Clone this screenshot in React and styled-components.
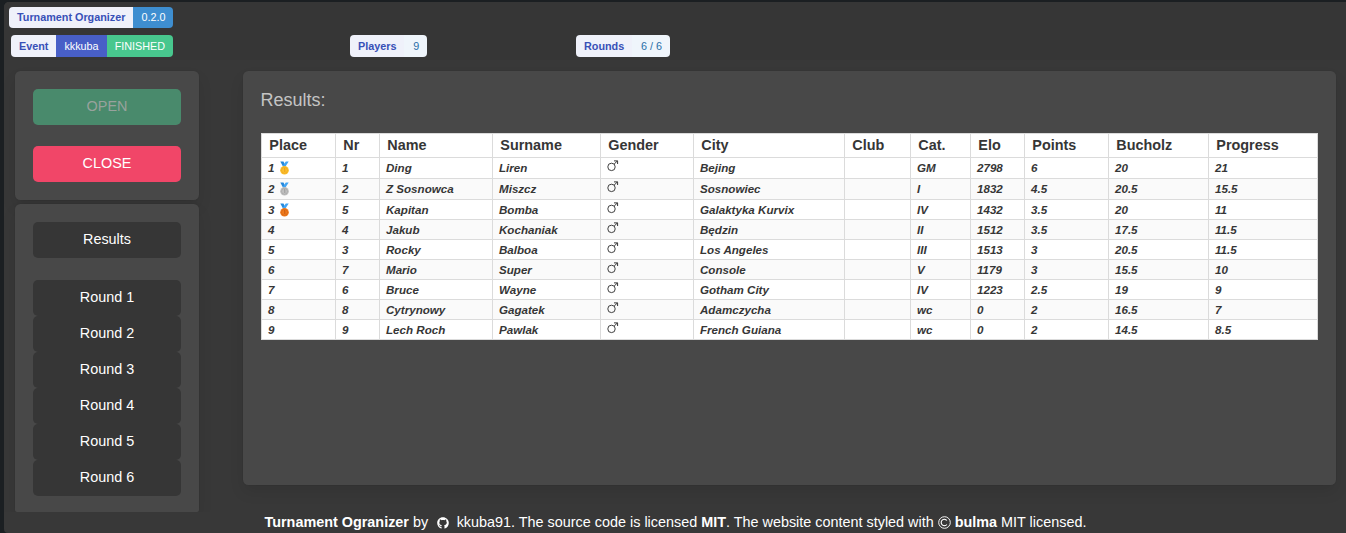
import React from 'react';
import styled, { createGlobalStyle } from 'styled-components';
import { FaGithub } from 'react-icons/fa';

const Global = createGlobalStyle`
  *, *::before, *::after { box-sizing: border-box; }
  body {
    margin: 0;
    background: #1b1f22;
    color: #fff;
    font-family: "Liberation Sans", Arial, sans-serif;
    font-size: 14.4px;
    line-height: 1.5;
    overflow: hidden;
  }
`;

const Window = styled.div`
  height: 531px;
  margin: 2px 0 0 4px;
  background: #383838;
  border-radius: 5px 0 0 4px;
  display: flex;
  flex-direction: column;
  overflow: hidden;
`;

const Header = styled.header`
  flex: none;
  height: 58px;
  padding: 5px 5px 0;
  background: #363636;
`;

const InfoRow = styled.div`
  display: grid;
  grid-template-columns: 339px 226px 1fr;
  padding: 7px 0 0 2px;
`;

const Tags = styled.div`
  display: flex;
  width: max-content;
  height: ${({ $h }) => $h || 22}px;
  border-radius: 4px;
  overflow: hidden;
`;

const tones = {
  name: ['#eff1fa', '#3850b7'],
  info: ['#3e8ed0', '#fff'],
  link: ['#485fc7', '#fff'],
  success: ['#48c78e', '#fff'],
  value: ['#eff5fb', '#296fa8'],
};

const Tag = styled.span`
  display: flex;
  align-items: center;
  padding: 0 8px;
  font-size: 10.8px;
  white-space: nowrap;
  font-weight: ${({ $tone }) => ($tone === 'name' ? 700 : 400)};
  background: ${({ $tone }) => tones[$tone][0]};
  color: ${({ $tone }) => tones[$tone][1]};

  ${Tags} > &:last-child { padding-left: ${({ $tone }) => ($tone === 'value' ? 8.8 : 8)}px; }
`;

const Body = styled.main`
  flex: none;
  height: 452px;
  padding: 11px 10px 0 11px;
  display: grid;
  grid-template-columns: 184px 1093px;
  column-gap: 44px;
  overflow: hidden;
`;

const Sidebar = styled.aside`
  display: flex;
  flex-direction: column;
  gap: 4px;
  height: 441px;
`;

const Box = styled.section`
  background: #484848;
  border-radius: 5.4px;
  padding: 18px;
  box-shadow: 0 7.2px 14.4px -1.8px rgba(10, 10, 10, 0.1), 0 0 0 1px rgba(10, 10, 10, 0.02);
`;

const ControlBox = styled(Box)`
  height: 129px;
  display: flex;
  flex-direction: column;
  gap: 21px;
`;

const NavBox = styled(Box)`
  height: 308px;
  border-radius: 5.4px 5.4px 2px 2px;
`;

const ResultsBox = styled(Box)`
  height: 414px;
`;

const Button = styled.button`
  display: block;
  flex: none;
  width: 100%;
  height: 36px;
  padding: 0 0 1px;
  border: 0;
  border-radius: 5px;
  font: inherit;
  color: #fff;
  background: ${({ $bg }) => $bg || '#363636'};
  &:disabled { color: #98a29d; }
`;

const RoundList = styled.nav`
  margin-top: 22px;
`;

const Title = styled.h1`
  margin: 0 0 21px -0.5px;
  height: 23px;
  line-height: 22px;
  font-size: 18px;
  font-weight: 400;
  color: #c4c4c4;
`;

const Table = styled.table`
  width: 1057px;
  table-layout: fixed;
  border-collapse: separate;
  border-spacing: 0;
  border: solid #dbdbdb;
  border-width: 1px 0 0 1px;
  background: #fff;
  color: #363636;
`;

const Col = styled.col`
  width: ${({ $w }) => $w}px;
`;

const Th = styled.th`
  height: 24px;
  padding: 0 0 1px 7.3px;
  border: solid #dbdbdb;
  border-width: 0 1px 1px 0;
  text-align: left;
  line-height: 22px;
`;

const Tr = styled.tr`
  height: ${({ $tall }) => ($tall ? 21 : 20)}px;
  background: ${({ $striped }) => ($striped ? '#fafafa' : '#fff')};
`;

const Td = styled.td`
  padding: 0 0 0 6px;
  border: solid #dbdbdb;
  border-width: 0 1px 1px 0;
  font-size: 11.6px;
  font-weight: 700;
  font-style: italic;
  line-height: 16px;
  white-space: nowrap;
`;

const PlaceCell = styled.div`
  display: flex;
  align-items: center;
  gap: 4px;
`;

const MedalIcon = styled.svg`
  width: 13px;
  height: 14px;
`;

const GenderIcon = styled.svg`
  display: block;
  width: 12px;
  height: 12px;
  margin: -4px 0 0;
`;

const Footer = styled.footer`
  display: flex;
  align-items: center;
  height: 20px;
  padding-left: 260.5px;
  white-space: pre;
  line-height: 20px;
`;

const GithubSlot = styled.span`
  display: flex;
  margin: 1px 8px 0 8.5px;
  font-size: 12px;
`;

const CopyrightIcon = styled.svg`
  width: 13px;
  height: 13px;
  margin: 0 4px 0 0;
`;

const Medal = ({ color, shade }) => (
  <MedalIcon viewBox="0 0 13 14">
    <path d="M2.3 0.5H5.5L7.6 4.8L5.4 6.3Z" fill="#2488dc" />
    <path d="M10.7 0.5H7.8L4.8 5L7 6.3Z" fill="#42a5f5" />
    <circle cx="6.5" cy="9.3" r="4.3" fill={color} />
    <circle cx="6.5" cy="9.3" r="3" fill="none" stroke={shade} strokeWidth="0.35" />
    <path d="M6 8L6.8 7.5V11" fill="none" stroke={shade} strokeWidth="0.7" />
  </MedalIcon>
);

const Male = () => (
  <GenderIcon viewBox="0 0 12 12" fill="none" stroke="#363636">
    <circle cx="4.5" cy="6.9" r="3.7" strokeWidth="0.95" />
    <path d="M7.1 4.2L10.3 1M7 .9H10.6V4" strokeWidth="1" />
  </GenderIcon>
);

const Copyright = () => (
  <CopyrightIcon viewBox="0 0 13 13" fill="none" stroke="#fff">
    <circle cx="6.5" cy="6.5" r="5.8" strokeWidth="0.95" />
    <path d="M8.9 4.5A3.2 3.2 0 1 0 8.9 8.5" strokeWidth="1.15" />
  </CopyrightIcon>
);

const medals = [
  ['#fbc02d', '#e58f13'],
  ['#c0c0c0', '#8c8c8c'],
  ['#f07c1d', '#b94f13'],
];

const columns = [
  ['Place', 74], ['Nr', 44], ['Name', 113], ['Surname', 108], ['Gender', 93], ['City', 151],
  ['Club', 66], ['Cat.', 60], ['Elo', 54], ['Points', 84], ['Bucholz', 100], ['Progress', 109],
];

const players = [
  ['1', 'Ding', 'Liren', 'Bejing', 'GM', '2798', '6', '20', '21'],
  ['2', 'Z Sosnowca', 'Miszcz', 'Sosnowiec', 'I', '1832', '4.5', '20.5', '15.5'],
  ['5', 'Kapitan', 'Bomba', 'Galaktyka Kurvix', 'IV', '1432', '3.5', '20', '11'],
  ['4', 'Jakub', 'Kochaniak', 'Będzin', 'II', '1512', '3.5', '17.5', '11.5'],
  ['3', 'Rocky', 'Balboa', 'Los Angeles', 'III', '1513', '3', '20.5', '11.5'],
  ['7', 'Mario', 'Super', 'Console', 'V', '1179', '3', '15.5', '10'],
  ['6', 'Bruce', 'Wayne', 'Gotham City', 'IV', '1223', '2.5', '19', '9'],
  ['8', 'Cytrynowy', 'Gagatek', 'Adamczycha', 'wc', '0', '2', '16.5', '7'],
  ['9', 'Lech Roch', 'Pawlak', 'French Guiana', 'wc', '0', '2', '14.5', '8.5'],
];

export default function App() {
  return (
    <>
      <Global />
      <Window>
        <Header>
          <Tags $h={21}>
            <Tag $tone="name">Turnament Organizer</Tag>
            <Tag $tone="info">0.2.0</Tag>
          </Tags>
          <InfoRow>
            <Tags>
              <Tag $tone="name">Event</Tag>
              <Tag $tone="link">kkkuba</Tag>
              <Tag $tone="success">FINISHED</Tag>
            </Tags>
            <Tags>
              <Tag $tone="name">Players</Tag>
              <Tag $tone="value">9</Tag>
            </Tags>
            <Tags>
              <Tag $tone="name">Rounds</Tag>
              <Tag $tone="value">6 / 6</Tag>
            </Tags>
          </InfoRow>
        </Header>
        <Body>
          <Sidebar>
            <ControlBox>
              <Button disabled $bg="#498a6c">OPEN</Button>
              <Button $bg="#f14668">CLOSE</Button>
            </ControlBox>
            <NavBox>
              <Button>Results</Button>
              <RoundList>
                {[1, 2, 3, 4, 5, 6].map((n) => <Button key={n}>Round {n}</Button>)}
              </RoundList>
            </NavBox>
          </Sidebar>
          <ResultsBox>
            <Title>Results:</Title>
            <Table>
              <colgroup>{columns.map(([name, w]) => <Col key={name} $w={w} />)}</colgroup>
              <thead>
                <tr>{columns.map(([name]) => <Th key={name}>{name}</Th>)}</tr>
              </thead>
              <tbody>
                {players.map(([nr, name, surname, city, ...stats], i) => (
                  <Tr key={nr} $tall={i < 2} $striped={i % 2 === 1}>
                    <Td>
                      <PlaceCell>
                        {i + 1}
                        {medals[i] && <Medal color={medals[i][0]} shade={medals[i][1]} />}
                      </PlaceCell>
                    </Td>
                    <Td>{nr}</Td>
                    <Td>{name}</Td>
                    <Td>{surname}</Td>
                    <Td><Male /></Td>
                    <Td>{city}</Td>
                    <Td />
                    {stats.map((s, j) => <Td key={j}>{s}</Td>)}
                  </Tr>
                ))}
              </tbody>
            </Table>
          </ResultsBox>
        </Body>
        <Footer>
          <b>Turnament Ogranizer</b> by
          <GithubSlot><FaGithub /></GithubSlot>
          {'kkuba91. The source code is licensed '}<b>MIT</b>{'. The website content styled with '}
          <Copyright />
          <b>bulma</b> MIT licensed.
        </Footer>
      </Window>
    </>
  );
}
